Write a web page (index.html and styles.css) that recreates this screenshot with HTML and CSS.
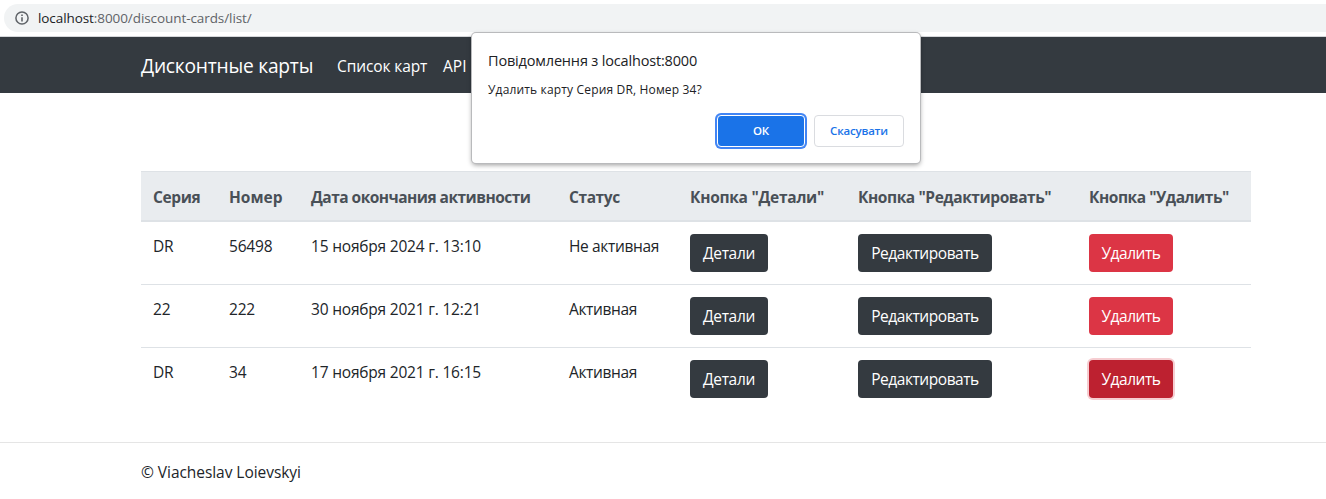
FILE: index.html
```html
<!DOCTYPE html>
<html lang="ru">
<head>
<meta charset="utf-8">
<title>Дисконтные карты</title>
<link rel="stylesheet" href="styles.css">
</head>
<body>
<div class="toolbar">
  <div class="omnibox">
    <svg class="info" width="14" height="14" viewBox="0 0 14 14"><circle cx="7" cy="7" r="6.1" fill="none" stroke="#5f6368" stroke-width="1.5"/><path d="M6.2 3.4h1.6V5H6.2zM6.2 6.2h1.6v4.4H6.2z" fill="#5f6368"/></svg>
    <span class="url"><span class="host">localhost</span>:8000/discount-cards/list/</span>
  </div>
</div>
<nav class="navbar">
  <a class="brand">Дисконтные карты</a>
  <a class="nav-link nav-list">Список карт</a>
  <a class="nav-link nav-api">API</a>
</nav>
<main class="container">
  <table class="table">
    <colgroup><col class="c1"><col class="c2"><col class="c3"><col class="c4"><col class="c5"><col class="c6"><col class="c7"></colgroup>
    <thead>
      <tr><th>Серия</th><th class="h-number">Номер</th><th class="h-date">Дата окончания активности</th><th>Статус</th><th class="h-details">Кнопка "Детали"</th><th class="h-edit">Кнопка "Редактировать"</th><th class="h-delete">Кнопка "Удалить"</th></tr>
    </thead>
    <tbody>
      <tr><td>DR</td><td>56498</td><td>15 ноября 2024 г. 13:10</td><td class="status">Не активная</td><td><a class="btn details">Детали</a></td><td><a class="btn edit">Редактировать</a></td><td><a class="btn delete">Удалить</a></td></tr>
      <tr><td>22</td><td>222</td><td>30 ноября 2021 г. 12:21</td><td class="status">Активная</td><td><a class="btn details">Детали</a></td><td><a class="btn edit">Редактировать</a></td><td><a class="btn delete">Удалить</a></td></tr>
      <tr><td>DR</td><td>34</td><td>17 ноября 2021 г. 16:15</td><td class="status">Активная</td><td><a class="btn details">Детали</a></td><td><a class="btn edit">Редактировать</a></td><td><a class="btn delete active">Удалить</a></td></tr>
    </tbody>
  </table>
</main>
<footer class="footer"><span class="copy">© Viacheslav Loievskyi</span></footer>
<div class="dialog">
  <div class="dialog-title">Повідомлення з localhost:8000</div>
  <div class="dialog-text">Удалить карту Серия DR, Номер 34?</div>
  <div class="dialog-actions">
    <button class="dbtn ok">ОК</button>
    <button class="dbtn cancel">Скасувати</button>
  </div>
</div>
</body>
</html>
```
FILE: styles.css
```css
* { box-sizing: border-box; }
body {
  margin: 0;
  height: 499px;
  overflow: hidden;
  background: #fff;
  color: #212529;
  font: 15.5px/24px "Open Sans", "Noto Sans", sans-serif;
  white-space: nowrap;
}
.toolbar { height: 37px; padding: 4px 0 0 4px; border-bottom: 1px solid #d5d7da; }
.omnibox {
  display: flex;
  align-items: center;
  gap: 9px;
  height: 28px;
  padding-left: 11px;
  border-radius: 14px 0 0 14px;
  background: #f1f3f4;
}
.info { flex: none; }
.url { font-size: 13.5px; color: #5f6368; letter-spacing: -0.08px; }
.host { color: #202124; }
.navbar {
  display: flex;
  align-items: center;
  height: 56px;
  padding: 1px 0 0 141px;
  background: #343a40;
  color: #fff;
}
.brand { width: 196px; font-size: 19.2px; letter-spacing: -0.23px; }
.nav-list { width: 106px; letter-spacing: -0.1px; }
.container { width: 1110px; margin: 78px 0 0 141px; }
.table { width: 1110px; table-layout: fixed; border-spacing: 0; }
.c1 { width: 76px; }
.c2 { width: 82px; }
.c3 { width: 258px; }
.c4 { width: 121px; }
.c5 { width: 168px; }
.c6 { width: 231px; }
.c7 { width: 174px; }
.table th {
  height: 51px;
  padding: 13px 12px 11px;
  border-top: 1px solid #dee2e6;
  border-bottom: 2px solid #dee2e6;
  background: #e9ecef;
  color: #495057;
  font-weight: 700;
  text-align: left;
  letter-spacing: -0.4px;
}
.table .h-number { letter-spacing: 0; }
.table .h-date { letter-spacing: -0.52px; }
.table .h-details { letter-spacing: -0.27px; }
.table .h-edit { letter-spacing: -0.42px; }
.table .h-delete { letter-spacing: -0.46px; }
.table td { height: 63px; padding: 12px; border-top: 1px solid #dee2e6; vertical-align: top; letter-spacing: -0.2px; }
.table .status { letter-spacing: -0.36px; }
.table tbody tr:first-child td { height: 62px; border-top: 0; }
.btn {
  display: flex;
  align-items: center;
  justify-content: center;
  height: 38px;
  border-radius: 4px;
  background: #343a40;
  color: #fff;
  letter-spacing: -0.45px;
}
.details { width: 78px; letter-spacing: -0.3px; }
.edit { width: 134px; }
.delete { width: 84px; background: #dc3545; }
.active { background: #bd2130; box-shadow: 0 0 0 2px #f6cdd1; }
.footer { margin-top: 32px; padding: 17px 0 0 141px; border-top: 1px solid #e5e5e5; }
.copy { letter-spacing: -0.05px; }
.dialog {
  position: absolute;
  left: 472px;
  top: 33px;
  width: 448px;
  height: 130px;
  padding: 16px;
  border-radius: 4px;
  background: #fff;
  color: #202124;
  box-shadow: 0 0 0 1px #b9babc, 0 2px 5px rgba(0, 0, 0, 0.4);
}
.dialog-title { font-size: 14.5px; line-height: 24px; letter-spacing: -0.17px; }
.dialog-text { margin-top: 7px; font-size: 12px; line-height: 20px; letter-spacing: 0.16px; }
.dialog-actions { display: flex; justify-content: flex-end; gap: 9px; margin-top: 15px; }
.dbtn {
  width: 90px;
  height: 32px;
  padding: 0;
  border: 1px solid #dadce0;
  border-radius: 4px;
  background: #fff;
  color: #1a73e8;
  font: 600 11.5px/30px "Open Sans", sans-serif;
  letter-spacing: -0.2px;
}
.ok { width: 88px; background: #1a73e8; border-color: #fff; color: #fff; box-shadow: 0 0 0 2px #4285f4; }
```
